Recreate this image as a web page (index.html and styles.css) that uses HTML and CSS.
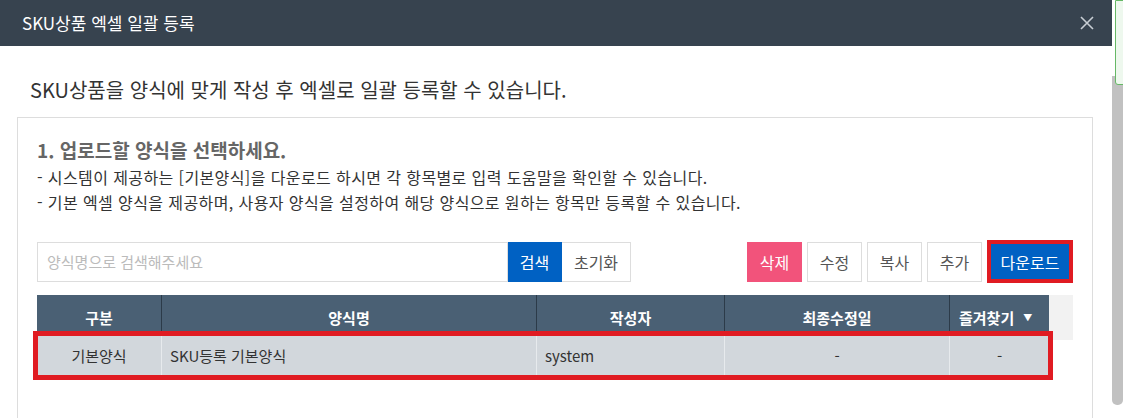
FILE: index.html
```html
<!DOCTYPE html>
<html lang="ko">
<head>
    <meta charset="UTF-8">
    <meta name="viewport" content="width=device-width, initial-scale=1.0">
    <title>SKU상품 엑셀 일괄 등록</title>
    <link rel="stylesheet" href="styles.css">
</head>
<body>
    <div class="modal">
        <div class="modal-header">
            <h2>SKU상품 엑셀 일괄 등록</h2>
            <button class="close-btn" aria-label="닫기">
                <svg width="14" height="14" viewBox="0 0 14 14"><path d="M1 1 L13 13 M13 1 L1 13" stroke="#c8ced4" stroke-width="1.6" fill="none"/></svg>
            </button>
        </div>

        <p class="intro">SKU상품을 양식에 맞게 작성 후 엑셀로 일괄 등록할 수 있습니다.</p>

        <div class="panel">
            <h3>1. 업로드할 양식을 선택하세요.</h3>
            <p class="note">- 시스템이 제공하는 [기본양식]을 다운로드 하시면 각 항목별로 입력 도움말을 확인할 수 있습니다.</p>
            <p class="note">- 기본 엑셀 양식을 제공하며, 사용자 양식을 설정하여 해당 양식으로 원하는 항목만 등록할 수 있습니다.</p>

            <div class="toolbar">
                <div class="search">
                    <input type="text" placeholder="양식명으로 검색해주세요">
                    <button class="btn btn-blue">검색</button>
                    <button class="btn">초기화</button>
                </div>
                <div class="actions">
                    <button class="btn btn-pink">삭제</button>
                    <button class="btn">수정</button>
                    <button class="btn">복사</button>
                    <button class="btn">추가</button>
                    <button class="btn btn-blue btn-marked">다운로드</button>
                </div>
            </div>

            <div class="grid">
                <div class="grid-head">
                    <div class="th">구분</div>
                    <div class="th">양식명</div>
                    <div class="th">작성자</div>
                    <div class="th">최종수정일</div>
                    <div class="th th-fav">즐겨찾기 <span class="caret">&#9660;</span></div>
                    <div class="gutter"></div>
                </div>
                <div class="grid-row selected">
                    <div class="td center">기본양식</div>
                    <div class="td">SKU등록 기본양식</div>
                    <div class="td">system</div>
                    <div class="td center">-</div>
                    <div class="td center">-</div>
                </div>
            </div>
        </div>
    </div>

    <div class="scrollbar"><div class="thumb"></div></div>
    <div class="toast"></div>
</body>
</html>
```

FILE: styles.css
```css
body {
    margin: 0;
    font-family: "Noto Sans CJK KR", "Open Sans", sans-serif;
    color: #333;
    background: #fff;
    display: flex;
    height: 418px;
    overflow: hidden;
}
.modal {
    flex: 1;
}
.modal-header {
    height: 46px;
    background-color: #37434f;
    display: flex;
    align-items: center;
    justify-content: space-between;
    padding: 0 18px 0 22px;
}
.modal-header h2 {
    margin: 0;
    font-size: 17px;
    font-weight: normal;
    color: #fff;
    line-height: 24px;
}
.close-btn {
    background: none;
    border: none;
    padding: 0;
    width: 14px;
    height: 14px;
    cursor: pointer;
    display: flex;
}
.intro {
    margin: 0;
    padding: 30px 0 0 30px;
    height: 41px;
    font-size: 20px;
    line-height: 28px;
    color: #333;
}
.panel {
    margin-left: 17px;
    width: 1036px;
    padding: 19px 19px 60px;
    border: 1px solid #ddd;
}
.panel h3 {
    margin: 0 0 2px;
    font-size: 19px;
    line-height: 26px;
    color: #666;
    font-weight: bold;
}
.note {
    margin: 0;
    font-size: 16px;
    letter-spacing: 0.4px;
    line-height: 25px;
    color: #333;
}
.toolbar {
    margin-top: 25px;
    display: flex;
    justify-content: space-between;
    align-items: center;
    height: 43px;
}
.search {
    display: flex;
    height: 40px;
}
.search input {
    width: 471px;
    box-sizing: border-box;
    border: 1px solid #ddd;
    padding: 0 9px;
    font-family: inherit;
    font-size: 15px;
    outline: none;
}
.search input::placeholder {
    color: #bbb;
}
.btn {
    box-sizing: border-box;
    height: 40px;
    padding: 0;
    border: 1px solid #ddd;
    background: #fff;
    color: #555;
    font-family: inherit;
    font-size: 16px;
    cursor: pointer;
}
.search .btn {
    border-left: none;
}
.search .btn-blue {
    width: 54px;
}
.search .btn:last-child {
    width: 69px;
}
.btn-blue {
    background-color: #0061c3;
    border-color: #0061c3;
    color: #fff;
}
.btn-pink {
    background-color: #f2537b;
    border-color: #f2537b;
    color: #fff;
}
.actions {
    display: flex;
    align-items: center;
    gap: 5px;
}
.actions .btn {
    width: 55px;
}
.actions .btn-marked {
    width: 86px;
    height: 43px;
    border: 4px solid #e01b22;
}
.grid {
    margin-top: 12px;
}
.grid-head {
    display: grid;
    grid-template-columns: 124px 375px 188px 225px 100px 24px;
    height: 40px;
}
.th {
    background-color: #4a6074;
    color: #fff;
    font-size: 15px;
    font-weight: bold;
    display: flex;
    align-items: center;
    justify-content: center;
    border-left: 1px solid #2c3b49;
}
.th:first-child {
    border-left: none;
}
.th-fav {
    justify-content: flex-start;
    padding-left: 9px;
}
.caret {
    font-size: 9px;
    margin-left: 9px;
}
.gutter {
    background-color: #f2f2f2;
    height: 45px;
}
.grid-row {
    display: grid;
    grid-template-columns: 124px 375px 188px 225px 100px;
    width: 1012px;
    height: 41px;
    background-color: #d2d7dc;
    position: relative;
}
.grid-row.selected {
    outline: 5px solid #e01b22;
    outline-offset: -1px;
}
.td {
    font-size: 15px;
    display: flex;
    align-items: center;
    padding-left: 8px;
    border-left: 1px solid #e7eaed;
}
.td:first-child {
    border-left: none;
}
.td.center {
    justify-content: center;
    padding-left: 0;
}
.scrollbar {
    width: 11px;
    padding-top: 76px;
    background: #fff;
}
.thumb {
    height: 329px;
    background-color: #c1c1c1;
    border-radius: 0 0 5px 5px;
}
.toast {
    position: absolute;
    top: 0;
    left: 1115px;
    width: 20px;
    height: 85px;
    box-sizing: border-box;
    border: 1px solid #66b866;
    border-radius: 0 0 0 3px;
    background-color: #eef8ee;
}
```
